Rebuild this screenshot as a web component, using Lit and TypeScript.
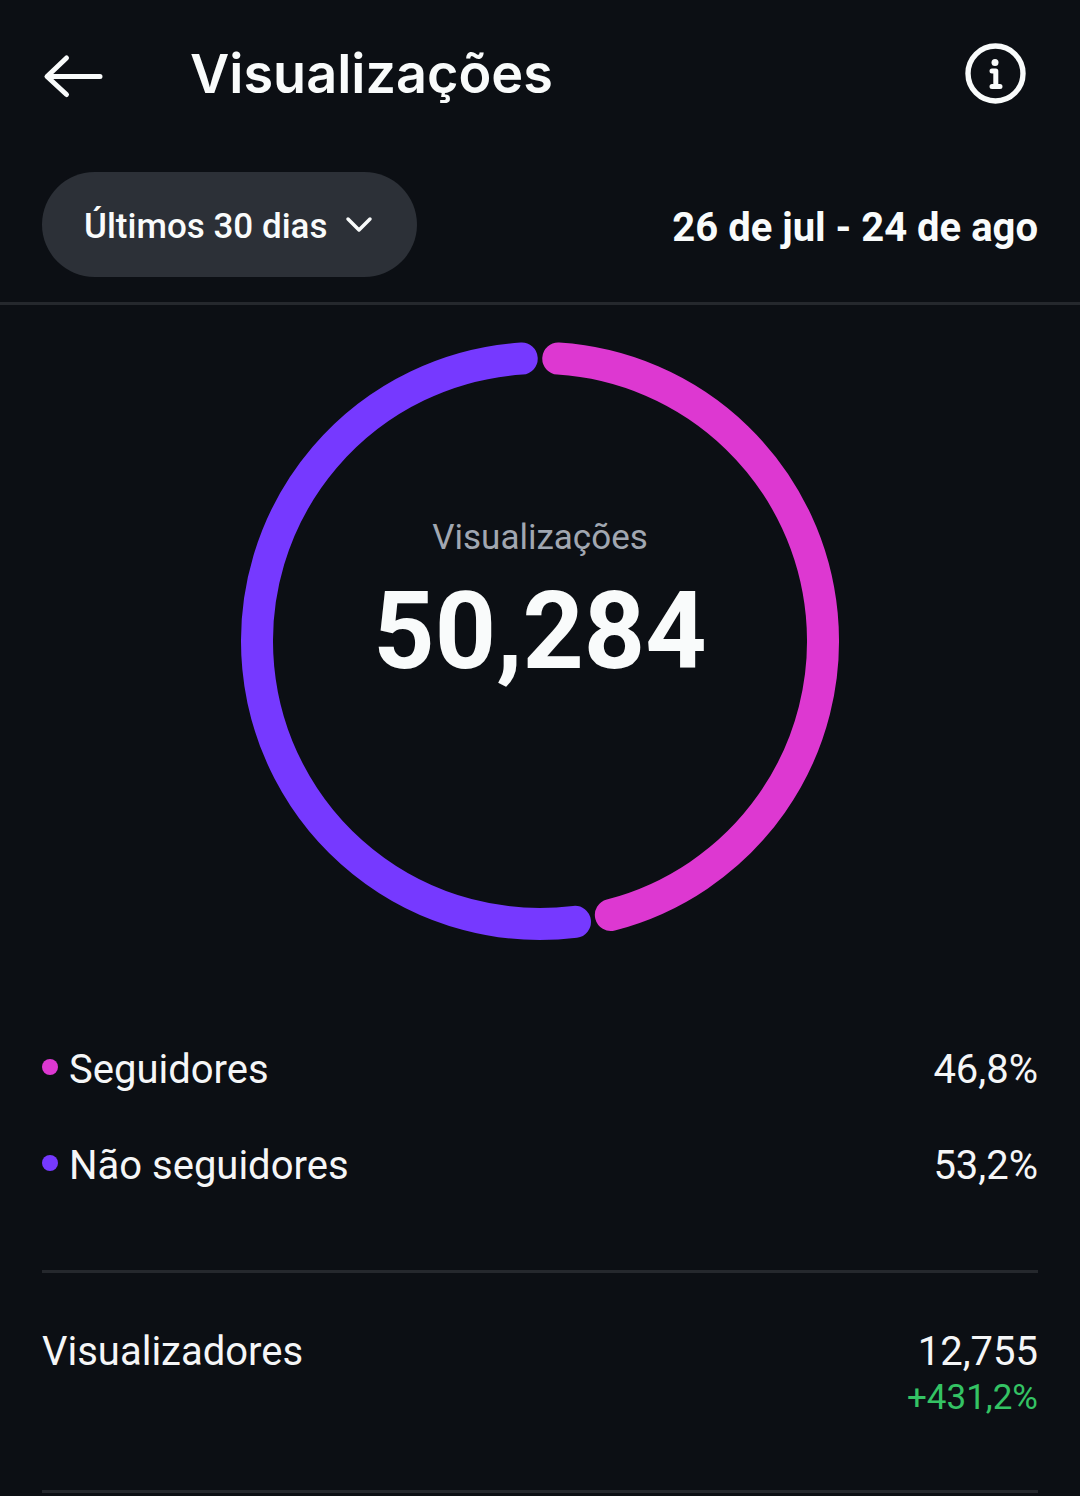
import { LitElement, html, css, svg } from "lit";
import { customElement, property } from "lit/decorators.js";
import { classMap } from "lit/directives/class-map.js";

interface Segment {
  label: string;
  value: number;
  tone: "pink" | "violet";
}

const SEGMENTS: Segment[] = [
  { label: "Seguidores", value: 46.8, tone: "pink" },
  { label: "Não seguidores", value: 53.2, tone: "violet" },
];

const percent = (n: number) => `${n.toFixed(1).replace(".", ",")}%`;

@customElement("views-ring")
export class ViewsRing extends LitElement {
  @property() label = "";
  @property() total = "";
  @property({ attribute: false }) segments: Segment[] = [];

  static styles = css`
    :host {
      display: grid;
      place-items: center;
      font-family: Roboto, "Liberation Sans", sans-serif;
    }
    .ring,
    .caption {
      grid-area: 1 / 1;
    }
    .ring {
      width: 600px;
      max-width: 100%;
      display: block;
    }
    .arc {
      fill: none;
      stroke-width: 32;
      stroke-linecap: round;
    }
    .pink {
      stroke: #dd38d1;
    }
    .violet {
      stroke: #7639ff;
    }
    .caption {
      display: flex;
      flex-direction: column;
      align-items: center;
      padding-bottom: 74px;
    }
    .label {
      font-size: 35px;
      line-height: 44px;
      color: #a1a7b1;
    }
    .total {
      font-size: 107px;
      line-height: 120px;
      font-weight: 700;
      color: #f9fbfb;
      margin-top: 12px;
    }
  `;

  private arcs() {
    const radius = 283;
    const pad = 3.7;
    const point = (deg: number) => {
      const a = (deg * Math.PI) / 180;
      return `${(300 + radius * Math.sin(a)).toFixed(2)} ${(300 - radius * Math.cos(a)).toFixed(2)}`;
    };
    let start = 0;
    return this.segments.map((s) => {
      const sweep = Math.round(s.value) * 3.6;
      const from = start + pad;
      const to = start + sweep - pad;
      start += sweep;
      const large = to - from > 180 ? 1 : 0;
      return svg`<path class="arc ${s.tone}" d="M${point(from)} A${radius} ${radius} 0 ${large} 1 ${point(to)}"></path>`;
    });
  }

  render() {
    return html`
      <svg class="ring" viewBox="0 0 600 600" aria-hidden="true">${this.arcs()}</svg>
      <div class="caption">
        <span class="label">${this.label}</span>
        <strong class="total">${this.total}</strong>
      </div>
    `;
  }
}

@customElement("app-root")
export class AppRoot extends LitElement {
  static styles = css`
    :host {
      display: block;
      min-height: 100vh;
      background: #0c0f14;
      color: #f5f6f7;
      font-family: Roboto, "Liberation Sans", sans-serif;
    }
    * {
      box-sizing: border-box;
    }
    button {
      border: 0;
      background: none;
      color: inherit;
      font: inherit;
      padding: 0;
      cursor: pointer;
    }
    svg {
      display: block;
      fill: none;
      stroke: currentColor;
      stroke-linecap: round;
      stroke-linejoin: round;
    }
    .header {
      display: flex;
      align-items: center;
      padding: 40px 52px 40px 42px;
      color: #f9fbfb;
    }
    .title {
      flex: 1;
      margin: 0;
      padding-left: 84px;
      font-family: Inter, Roboto, sans-serif;
      font-size: 54px;
      line-height: 68px;
      font-weight: 600;
    }
    .filters {
      display: flex;
      align-items: center;
      justify-content: space-between;
      padding: 24px 42px 25px;
      border-bottom: 3px solid #25282d;
    }
    .period {
      display: flex;
      align-items: center;
      gap: 16px;
      height: 105px;
      padding: 3px 42px 0;
      border-radius: 53px;
      background: #2c3037;
      color: #f9fbfb;
      font-size: 35px;
      font-weight: 500;
    }
    .range {
      font-size: 40px;
      line-height: 48px;
      font-weight: 700;
      color: #f9fbfb;
      padding-top: 6px;
    }
    .chart {
      padding: 36px 42px 81px;
    }
    .rows {
      margin: 0 42px;
      padding-bottom: 56px;
      border-bottom: 3px solid #25282d;
    }
    .row {
      display: flex;
      align-items: center;
      justify-content: space-between;
      height: 96px;
      font-size: 40px;
      line-height: 48px;
    }
    dl,
    dd,
    dt {
      margin: 0;
    }
    .name {
      display: flex;
      align-items: center;
      gap: 11px;
    }
    .dot {
      width: 16px;
      height: 16px;
      margin-bottom: 6px;
      border-radius: 50%;
    }
    .pink {
      background: #dd38d1;
    }
    .violet {
      background: #7639ff;
    }
    .viewers {
      display: flex;
      justify-content: space-between;
      margin: 0 42px;
      padding: 55px 0 70px;
      border-bottom: 3px solid #25282d;
      font-size: 40px;
      line-height: 48px;
    }
    .figures {
      text-align: right;
    }
    .growth {
      font-size: 35px;
      line-height: 44px;
      color: #34c364;
    }
  `;

  render() {
    return html`
      <header class="header">
        <button aria-label="Voltar">
          <svg width="64" height="52" viewBox="0 0 64 52" stroke-width="5">
            <path d="M58 28.500H6M24.500 10 5 28.500 24.500 46.500"></path>
          </svg>
        </button>
        <h1 class="title">Visualizações</h1>
        <button aria-label="Informações">
          <svg width="64" height="64" viewBox="0 0 64 64">
            <circle cx="31.500" cy="31.500" r="27.500" stroke-width="5.400"></circle>
            <circle cx="31" cy="20.500" r="3.500" fill="currentColor" stroke="none"></circle>
            <path d="M28 29H31.800V44M28 44.500H36" stroke-width="5"></path>
          </svg>
        </button>
      </header>
      <section class="filters">
        <button class="period" aria-haspopup="listbox">
          <span>Últimos 30 dias</span>
          <svg width="32" height="32" viewBox="0 0 32 32" stroke-width="3.500">
            <path d="M5 9 16 20 27 9"></path>
          </svg>
        </button>
        <span class="range">26 de jul - 24 de ago</span>
      </section>
      <main>
        <views-ring class="chart" label="Visualizações" total="50,284" .segments=${SEGMENTS}></views-ring>
        <dl class="rows">
          ${SEGMENTS.map(
            (s) => html`
              <div class="row">
                <dt class="name">
                  <span class=${classMap({ dot: true, [s.tone]: true })}></span>${s.label}
                </dt>
                <dd>${percent(s.value)}</dd>
              </div>
            `
          )}
        </dl>
        <dl class="viewers">
          <dt>Visualizadores</dt>
          <dd class="figures">
            <div>12,755</div>
            <div class="growth">+431,2%</div>
          </dd>
        </dl>
      </main>
    `;
  }
}
